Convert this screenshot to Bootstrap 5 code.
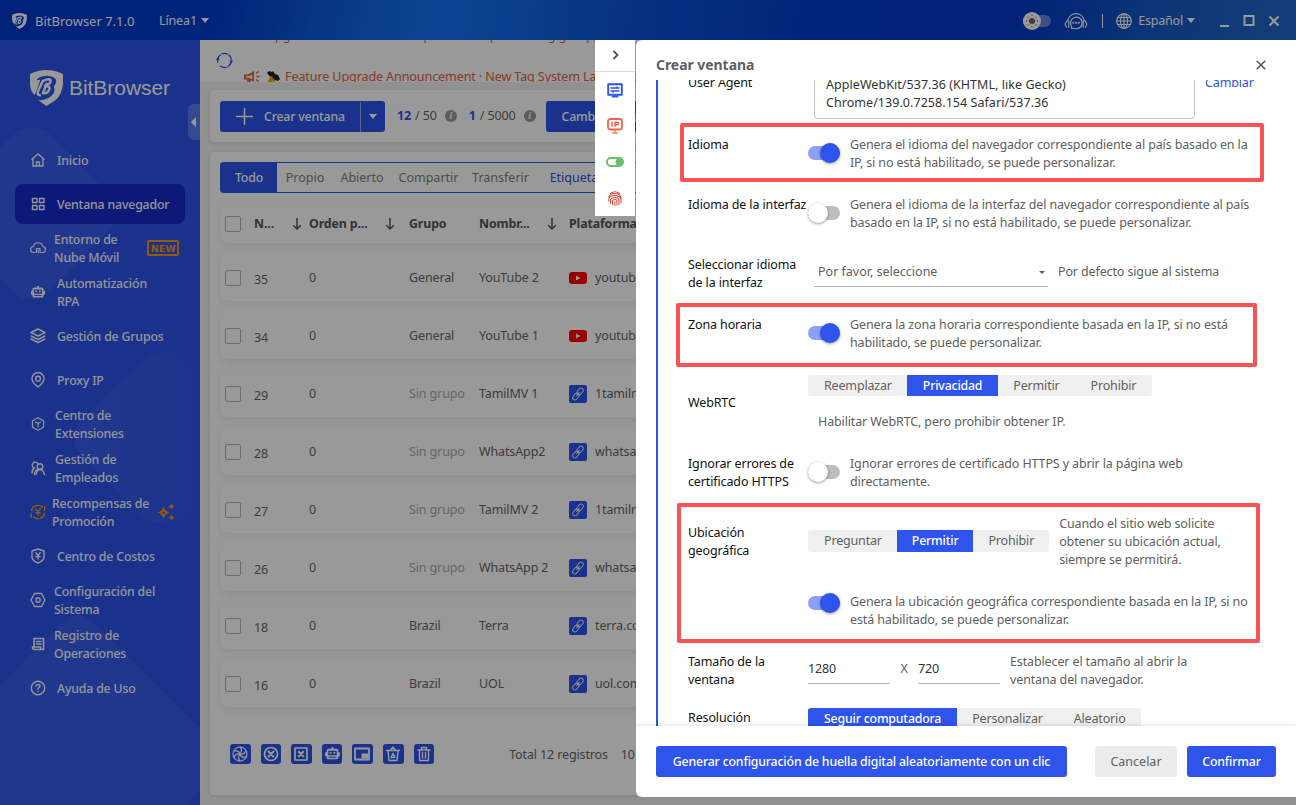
<!DOCTYPE html>
<html lang="es">
<head>
<meta charset="utf-8">
<meta name="viewport" content="width=device-width, initial-scale=1">
<title>BitBrowser</title>
<link href="https://cdn.jsdelivr.net/npm/bootstrap@5.3.0/dist/css/bootstrap.min.css" rel="stylesheet">
<style>
:root{--pri:#2e54eb}
body{font-family:"Noto Sans","Noto Sans CJK SC",sans-serif;font-size:12.5px;letter-spacing:-.13px;line-height:18px;color:#666;background:#f2f2f2;width:1296px;height:805px;overflow:hidden}
svg{display:block;flex:none}
.ic{fill:none;stroke:currentColor;stroke-width:1.4;stroke-linecap:round;stroke-linejoin:round}
.semi{font-weight:500;font-size:12.3px;letter-spacing:-.16px}
.fill-pri{background:var(--pri);color:#fff}
.txt-pri{color:var(--pri)}
.titlebar{height:40px;color:#fff;background:linear-gradient(100deg,#0039cc 0,#003dcc 17%,#0b59dd 24%,#1672f5 34%,#0b55dd 48%,#0039c8 64%,#0037c6 78%,#1458c6 88%,#2068c9 100%);padding:1px 17px 0 12px}
.appname{font-size:13px;letter-spacing:0;width:100px}
.caret{width:0;height:0;border:4.5px solid transparent;border-top:5px solid currentColor;border-bottom:0}
.daynight{width:28px;height:12px;border-radius:6px;background:linear-gradient(90deg,#fff 50%,#6c82dd 50%)}
.daynight svg{position:absolute;left:0;top:-3px}
.vline{width:1px;height:14px;background:#fff}
.side{width:200px;height:765px;background:var(--pri);color:#fff}
.side-deco{position:absolute;inset:0}
.brand-name{font:21px "Liberation Sans",Arial,sans-serif;letter-spacing:-.05px;margin-left:6px;padding-top:6px}
.brand{padding:30px 0 0 30px;height:99px}
.handle{position:absolute;left:188px;top:64px;width:12px;height:36px;border-radius:6px 0 0 6px;background:rgba(255,255,255,.22)}
.handle::after{content:"";position:absolute;left:3px;top:13px;border:5px solid transparent;border-right-color:#fff;border-left:0}
.menu{padding:1px 15px}
.menu-item{height:40px;margin-bottom:4px;border-radius:8px;padding:2px 0 0 14px;opacity:.96}
.menu-item.on{background:#162ac8}
.menu-item svg{width:18px;height:18px;margin:-2px 10px 0 0}
.menu-item.m1 svg{margin-right:7px}.menu-item.m2 svg{margin-right:5px}.menu-item.m3 svg{margin-right:8px}
.gold{color:#f90}
.new-tag{border:2px solid #f90;color:#f90;font:bold 9.5px/11px "DejaVu Sans",sans-serif;border-radius:2px;letter-spacing:0;width:32px;height:16px;padding-top:.5px;margin:-2px 0 0 28px}
.main-col{width:1096px}
.notice{height:42px;overflow:hidden;background:#fff;padding-left:16px;color:#e0643c}
.notice-lines{margin:-13px 0 0 11px;font-size:12.6px;line-height:18px;letter-spacing:-.13px;white-space:nowrap}
.notice-prev{padding-left:22px}
.notice-cur{margin-top:23px}
.panel{background:#fff;margin-left:10px;border-radius:4px;box-shadow:0 1px 4px rgba(0,0,0,.12)}
.toolbar{height:52px;margin-top:8px;padding-left:10px}
.blk{height:31px;border-radius:3px;padding-top:1px}
.new-win{width:165px}
.new-win svg{margin:0 11px 0 16px}
.gap12{margin-left:12px}
.info{width:12px;height:12px;border-radius:50%;background:#999;color:#fff;font:italic bold 10px/12px "Liberation Serif",serif}
.listing{height:643px;margin-top:10px;padding:10px 0 0 10px}
.filters{height:31px;border:1px solid var(--pri);border-radius:3px 0 0 3px;color:#808080;letter-spacing:0}
.filters>span{width:56px;text-align:center;padding-top:1px}
.filters>.w58{width:58px}.filters>.w75{width:75px}.filters>.w69{width:69px}.filters>.w84{width:84px}
.gridrow{display:grid;grid-template-columns:29px 38px 17px 76px 24px 70px 68px 22px 300px;align-items:center;height:48px;margin-bottom:10px;border-radius:8px;box-shadow:0 3px 8px rgba(0,0,0,.07);padding:1px 0 0 5px;white-space:nowrap}
.gridhead{height:40px;margin-top:10px;font-weight:700;color:#555;font-size:12.4px}
.boxchk{width:16px;height:16px;border:1px solid #b4b4b4;border-radius:2px;margin-top:1px}
.none{color:#aaa}
.linkic{width:18px;height:18px;border-radius:2px}
.actions{padding:26px 0 0 10px}
.actions .act{width:20.600px;height:20px;border-radius:3px;margin-right:10px}
.shade{position:absolute;inset:0;background:rgba(0,0,0,.4)}
.quick{position:absolute;left:595px;top:40px;width:40px;height:176px;background:#fff}
.quick-top{height:32px;border-bottom:1px solid #ddd}
.drawer{position:absolute;left:636px;top:40px;width:660px;height:757px;background:#fff;border-radius:6px 0 0 6px;color:#606060;overflow:hidden}
.drawer-head{height:40px;padding:10px 30px 0 20px}
.drawer-head b{font-size:14px;letter-spacing:-.05px;color:#606060}
.drawer-body{height:646px;overflow:hidden;margin-left:20px;border-left:2px solid var(--pri);padding-left:30px}
.drawer-foot{height:71px;box-shadow:0 -1px 4px rgba(0,0,0,.12);padding:0 20px;position:relative}
.frow{display:flex;white-space:nowrap}
.flabel{width:120px;color:#111;flex:none}
.h55{height:55px}.h56{height:56px}.h59{height:59px}.h60{height:60px}.h78{height:78px}.h80{height:80px}
.ua{margin:-10px 10px 0 6px;width:381px;height:49px;border:1px solid #c4c4c4;border-radius:4px;padding:5px 11px 0;color:#333;letter-spacing:.05px}
.up6{margin-top:-6px}
.sw{width:32px;height:20px;margin:7px 10px 0 0;position:relative;flex:none}
.sw::before{content:"";position:absolute;left:0;top:3px;width:32px;height:14px;border-radius:7px;background:#bdbdbd}
.sw::after{content:"";position:absolute;left:0;top:0;width:20px;height:20px;border-radius:50%;background:#fff;box-shadow:0 1px 3px rgba(0,0,0,.4)}
.sw.on::before{background:#8da1f4}
.sw.on::after{left:12px;background:var(--pri)}
.picker{margin-left:6px;width:234px;height:31px;border-bottom:1px solid #b5b5b5;padding:2px 3px 0 4px;letter-spacing:0}
.picker .caret{border-width:3px 3px 0}
.seg{display:flex;height:21px;background:#f0f0f0;border-radius:3px;overflow:hidden;width:max-content;line-height:21px;letter-spacing:-.17px}
.seg>span{padding:0 15.500px}
.seg>.on{background:var(--pri);color:#fff;font-weight:500;font-size:12.3px}
.seg3>span{padding:0 15px}
.seg>span:first-child{padding-left:16px}
.uline{width:82px;height:31px;border-bottom:1px solid #b5b5b5;color:#333;line-height:31px}
.actbtn{height:31px;border:0;border-radius:3px;padding:1px 0 0;text-align:center}
.frame{position:absolute;border:4px solid #fb5254;border-radius:2px}
.frame.f1{left:680px;top:123px;width:584px;height:59px}
.frame.f2{left:676px;top:303px;width:581px;height:64px}
.frame.f3{left:677px;top:503px;width:583px;height:140px}
</style>
<script src="https://cdn.jsdelivr.net/npm/bootstrap@5.3.0/dist/js/bootstrap.bundle.min.js"></script>
</head>
<body class="position-relative">
<svg width="0" height="0" class="position-absolute">
  <symbol id="shield" viewBox="0 0 32 35"><path fill="#fff" d="M0 4Q8 0 16 0T32 4V14Q31 24 24 30L16 35L8 29.500C20 29 26 22 23 16Q28 10 23 7Q17 4 9 7L6 10L10 9.500L6 21Q4.500 25.500 3.500 23.500Q0 19 0 14Z"/><path fill="none" stroke="#fff" stroke-width="2.400" stroke-linejoin="round" d="M10.500 24.500Q5.500 25 8.500 19L12.500 10.500Q20 7.500 20 10.500Q20 14 14.500 15.500Q20.500 15.500 18.500 19.500Q16.500 23.500 12.500 22.500L16.500 12.500"/></symbol>
  <symbol id="robot" viewBox="0 0 18 18"><path fill="currentColor" fill-rule="evenodd" d="M8 3h2v1.500h3q1.500 0 1.500 1.500v1.500l1.500 .5v3.500l-1.500 .5v1q0 1.500-1.500 1.500H5q-1.500 0-1.500-1.500v-1L2 11.500V8l1.500-.5V6q0-1.500 1.500-1.500h3ZM5 6.500v4.200h8V6.500ZM5.500 12v1h7v-1ZM6.300 7.500h1.700v1.700H6.300ZM10 7.500h1.700v1.700H10Z"/></symbol>
  <symbol id="chain" viewBox="0 0 18 18"><g fill="none" stroke="#fff" stroke-width="1" stroke-opacity=".85" transform="rotate(-50 9 9)"><rect x="2" y="6.800" width="7.500" height="4.400" rx="2.200"/><rect x="8.500" y="6.800" width="7.500" height="4.400" rx="2.200"/><path d="M6.500 9h5"/></g></symbol>
  <symbol id="tube" viewBox="0 0 18 12"><rect width="18" height="12" rx="3" fill="red"/><path d="M7 3.500v5L11.500 6Z" fill="#fff"/></symbol>
  <symbol id="sortdown" viewBox="0 0 10 14"><path fill="none" stroke="#555" stroke-width="1.500" d="M5 1v11M1.200 8.300 5 12l3.800-3.700"/></symbol>
</svg>

<header class="titlebar d-flex align-items-center">
  <svg width="15" height="16"><use href="#shield"/></svg>
  <span class="appname ms-2">BitBrowser 7.1.0</span>
  <span class="ms-4">Línea1</span><i class="caret ms-1"></i>
  <div class="d-flex align-items-center ms-auto">
    <div class="daynight position-relative"><svg width="18" height="18" viewBox="0 0 18 18"><circle cx="9" cy="9" r="9" fill="#fff"/><circle cx="9" cy="9" r="3" fill="#666"/><path d="M9 4V3M9 15v-1M4 9H3M15 9h-1M5.500 5.500l-.7-.7M12.500 5.500l.7-.7M5.500 12.500l-.7.7M12.500 12.500l.7.7" stroke="#777" stroke-width="1.300"/></svg></div>
    <svg width="24" height="18" viewBox="0 0 24 18" class="ic me-3" style="margin-left:13px"><g stroke-width="1.200"><path d="M4 8a8.200 8.200 0 0 1 16 0M3.500 8.500Q-.5 12 2.500 15M20.500 8.500Q24.500 12 21.500 15M4.800 9v6.500M19.200 9v6.500"/><path d="M7.500 16.500l.3-2a5.800 5.800 0 1 1 3 2Z"/></g><path d="M9.300 10.700h.1M12 10.700h.1M14.700 10.700h.1" stroke-width="1.900"/></svg>
    <i class="vline" style="margin-right:13px;margin-left:-2px"></i>
    <svg width="16" height="16" viewBox="0 0 16 16" class="ic"><g stroke-width="1.100"><circle cx="8" cy="8" r="7.300"/><ellipse cx="8" cy="8" rx="3.500" ry="7.300"/><path d="M8 .7v14.600M.7 8h14.600M1.700 4.500h12.600M1.700 11.500h12.600"/></g></svg>
    <span style="margin:0 4px 0 6px;letter-spacing:-.2px">Español</span><i class="caret"></i>
    <svg class="ms-4" width="60" height="14" viewBox="0 0 60 14" fill="none" stroke="#fff" stroke-width="2"><path d="M1 12h9M50.500 2.500l9 9M59.500 2.500l-9 9"/><path d="M25.500 2h9v9h-9z"/></svg>
  </div>
</header>

<div class="d-flex">
<aside class="side position-relative flex-shrink-0">
  <svg class="side-deco" width="200" height="765"><defs><linearGradient id="fade" x1="0" x2="1"><stop offset="0" stop-color="#fff" stop-opacity=".055"/><stop offset="1" stop-color="#fff" stop-opacity="0"/></linearGradient></defs><g fill="#fff" fill-opacity=".045"><path d="M0 108L17 92Q32 82 47 92L114 159Q122 173 112 187L47 253Q32 265 17 255L0 238Z"/><path d="M0 646L62 583Q78 568 94 583L200 689V750L186 765H0Z"/></g><path fill="url(#fade)" d="M78 384L144 319Q160 307 176 317L200 330V470L176 479Q160 487 144 478L80 415Q70 399 78 384Z"/></svg>
  <div class="brand d-flex position-relative"><svg width="33" height="36"><use href="#shield"/></svg><span class="brand-name">BitBrowser</span></div>
  <i class="handle"></i>
  <nav class="menu semi position-relative">
    <div class="menu-item d-flex align-items-center"><svg class="ic" viewBox="0 0 18 18"><path d="M3 8.300L9 3l6 5.300M4 8v7h10V8M7.500 15v-4h3v4"/></svg>Inicio</div>
    <div class="menu-item on d-flex align-items-center"><svg class="ic" viewBox="0 0 18 18"><path d="M3.500 3.500h4.500v4H3.500zM10.500 3.500H15v4h-4.500zM3.500 10.500h4.500v4H3.500zM10.500 10.500H15v4h-4.500z"/></svg>Ventana navegador</div>
    <div class="menu-item m1 d-flex align-items-center"><svg class="ic" viewBox="0 0 18 18"><path d="M6 13.500H5a3 3 0 0 1-.5-6 4.700 4.700 0 0 1 9.200 0 3 3 0 0 1-.5 6H12M7.500 13.500V9.500h3.500v4M9.300 11v2.500" stroke-width="1.200"/></svg><span>Entorno de<br>Nube Móvil</span><span class="new-tag text-center">NEW</span></div>
    <div class="menu-item d-flex align-items-center"><svg viewBox="0 0 18 18"><use href="#robot"/></svg><span>Automatización<br>RPA</span></div>
    <div class="menu-item d-flex align-items-center"><svg class="ic" viewBox="0 0 18 18"><path d="M9 2l7 3.500L9 9 2 5.500zM2 9l7 3.500L16 9M2 12l7 3.500 7-3.500"/></svg>Gestión de Grupos</div>
    <div class="menu-item d-flex align-items-center"><svg class="ic" viewBox="0 0 18 18"><path d="M9 16Q3 11.500 3 7.500a6 6 0 0 1 12 0Q15 11.500 9 16Z"/><circle cx="9" cy="7.700" r="2.400"/></svg>Proxy IP</div>
    <div class="menu-item m3 d-flex align-items-center"><svg class="ic" viewBox="0 0 18 18"><path d="M9 2.700l5.500 3v6.600L9 15.300l-5.500-3V5.700zM6.500 7L9 8.500 11.500 7M9 8.500V12" stroke-width="1.200"/></svg><span>Centro de<br>Extensiones</span></div>
    <div class="menu-item m3 d-flex align-items-center"><svg class="ic" viewBox="0 0 18 18"><path d="M5.500 9a3 3 0 1 1 3.500-4M3 14q0-4 2.500-5M5.500 15.500q0-4 3.500-5"/><circle cx="11" cy="7.500" r="2.800"/><path d="M7 15.500q.5-4.500 4-5 3.500.5 4.500 5"/></svg><span>Gestión de<br>Empleados</span></div>
    <div class="menu-item m2 d-flex align-items-center"><svg class="ic gold" viewBox="0 0 18 18"><path d="M2.500 7.500A6.800 6.800 0 0 1 13.500 4M15.500 10.500A6.800 6.800 0 0 1 4.500 14M15.700 3.500v3.500M2.300 14.500V11M6.500 6L9 8.500 11.500 6M9 8.500V12M7 9.700h4"/></svg><span>Recompensas de<br>Promoción</span><svg viewBox="0 0 18 18" fill="#f90" class="gold ms-2 me-0"><path fill-rule="evenodd" d="M6.500 3Q7.500 8.500 13 9.500 7.500 10.500 6.500 16.500 5.500 10.500 0 9.500 5.500 8.500 6.500 3ZM6.500 8.500a1.200 1.200 0 1 0 .1 0ZM14.500 0Q15 3 18 3.500 15 4 14.500 7 14 4 11 3.500 14 3 14.500 0ZM14.500 11Q15 14 18 14.500 15 15 14.500 18 14 15 11 14.500 14 14 14.500 11Z"/></svg></div>
    <div class="menu-item d-flex align-items-center"><svg class="ic" viewBox="0 0 18 18"><path d="M9 2l6 2v6q0 3.500-6 6-6-2.500-6-6V4zM6.800 5.800L9 8.300l2.200-2.500M9 8.300V12M7 9.500h4"/></svg>Centro de Costos</div>
    <div class="menu-item m1 d-flex align-items-center"><svg class="ic" viewBox="0 0 18 18"><path d="M5.500 2.500h7L16 9l-3.500 6.500h-7L2 9z"/><circle cx="9" cy="9" r="2.200"/></svg><span>Configuración del<br>Sistema</span></div>
    <div class="menu-item m1 d-flex align-items-center"><svg class="ic" viewBox="0 0 18 18"><path d="M5 11.500V3.500h9.500v11H5.500q-2 0-2-2.500h8v2.500M7.500 6.500h4.500M7.500 9h4.500" stroke-width="1.600"/></svg><span>Registro de<br>Operaciones</span></div>
    <div class="menu-item d-flex align-items-center"><svg class="ic" viewBox="0 0 18 18"><circle cx="9" cy="9" r="6.700"/><path d="M7 7.200Q7.200 5.500 9 5.500t2 1.700Q11 8.500 9 9.300v1M9 12.500v.1"/></svg>Ayuda de Uso</div>
  </nav>
</aside>

<main class="main-col">
  <div class="notice d-flex">
    <svg width="17" height="17" viewBox="0 0 17 17" class="ic txt-pri" style="margin-top:12px"><path stroke-width="1.300" d="M1.800 10A7 7 0 0 1 4.300 2.900M6 1.900A7 7 0 0 1 11.500 2.100M13 3.100A7 7 0 0 1 15.300 8M15 10.500A7 7 0 0 1 12 14.500M10.300 15.300A7 7 0 0 1 4.500 14.300"/><path fill="currentColor" d="M0 8L1.800 5 3.700 8zM13.300 8.500L15.200 11.500 17 8.500z" stroke="none"/></svg>
    <div class="notice-lines">
      <div class="notice-prev">Upgrade Announcement: update of important tag group,</div>
      <div class="notice-cur d-flex align-items-center">
        <svg width="16" height="14" viewBox="0 0 16 14"><path fill="currentColor" fill-rule="evenodd" d="M0 4.500h4L10 1v11L6.500 10 7 13.500H3.500L3 9.500H0ZM2 6.200v1.600h3L8.200 9.500v-5L5 6.200Z"/><path d="M12 3.500l2.500-2M12.500 6.500H15.500M12 9.500l2.500 2" stroke="currentColor" stroke-width="1.600"/></svg>
        <svg width="15" height="14" viewBox="0 0 15 14" style="margin:0 4px 0 6px"><path d="M1 3l2-2 3 1 1-1 2 3 3 1 2 4-2 2-6-2z" fill="#222"/><path d="M1 13L5 5.500 9.500 11z" fill="#f2a20c"/></svg>
        <span>Feature Upgrade Announcement · New Tag System Launched</span>
      </div>
    </div>
  </div>

  <section class="panel toolbar d-flex align-items-center">
    <div class="blk new-win fill-pri semi d-flex align-items-center">
      <svg width="17" height="17" viewBox="0 0 17 17"><path d="M8.500 0v17M0 8.500h17" stroke="#fff" stroke-width="1.500"/></svg>Crear ventana
      <span class="ms-auto d-flex align-items-center h-100 px-2 border-start border-light border-opacity-50"><i class="caret"></i></span>
    </div>
    <b class="txt-pri gap12">12</b><span class="mx-1">/ 50</span><span class="info text-center ms-1">i</span>
    <b class="txt-pri gap12">1</b><span class="mx-1">/ 5000</span><span class="info text-center ms-1">i</span>
    <div class="blk fill-pri semi d-flex align-items-center" style="margin-left:10px;width:140px;padding-left:16px">Cambiar vista</div>
  </section>

  <section class="panel listing">
    <div class="filters d-flex align-items-center">
      <span class="fill-pri semi h-100 d-flex align-items-center justify-content-center">Todo</span><span>Propio</span><span class="w58">Abierto</span><span class="w75">Compartir</span><span class="w69">Transferir</span><span class="w84 txt-pri">Etiquetas</span>
    </div>
    <div class="gridrow gridhead"><i class="boxchk"></i><span>N...</span><svg width="10" height="14"><use href="#sortdown"/></svg><span>Orden p...</span><svg width="10" height="14"><use href="#sortdown"/></svg><span>Grupo</span><span>Nombr...</span><svg width="10" height="14"><use href="#sortdown"/></svg><span>Plataforma</span></div>
    <div id="rows"></div>
    <div class="actions d-flex align-items-center">
      <span class="act fill-pri"><svg class="ic" width="20" height="20" viewBox="0 0 20 20"><circle cx="10" cy="10" r="7" stroke-width="1.200"/><path d="M10 3q3 3 0 7M16 7q-2 4-6 3M16 13q-5 1-6-3M10 17q-3-3 0-7M4 13q2-4 6-3M4 7q5-1 6 3" stroke-width="1.200"/></svg></span>
      <span class="act fill-pri"><svg class="ic" width="20" height="20" viewBox="0 0 20 20" ><circle cx="10" cy="10" r="6.500" stroke-width="1.700"/><path d="M7.500 7.500l5 5M12.500 7.500l-5 5" stroke-width="2"/></svg></span>
      <span class="act fill-pri"><svg class="ic" width="20" height="20" viewBox="0 0 20 20"><path d="M4 4h12v12H4z" stroke-width="1.700"/><path d="M7.800 7.800l4.400 4.400M12.200 7.800l-4.400 4.400" stroke-width="2.200"/></svg></span>
      <span class="act fill-pri d-flex align-items-center justify-content-center"><svg width="19" height="19"><use href="#robot"/></svg></span>
      <span class="act fill-pri"><svg class="ic" width="20" height="20" viewBox="0 0 20 20"><path d="M3 4.500h14v11H3z" stroke-width="1.800"/><path d="M9.500 9.500h6.500v5H9.500z" fill="#fff" stroke="none"/></svg></span>
      <span class="act fill-pri"><svg class="ic" width="20" height="20" viewBox="0 0 20 20"><path d="M3.500 6.500h13M5 6.500l1 10h8l1-10M7.500 6l2.500-3 2.500 3M8 13.500h4L10 9.500z"/></svg></span>
      <span class="act fill-pri"><svg class="ic" width="20" height="20" viewBox="0 0 20 20"><path d="M4 6h12M5.500 6v10.500h9V6M7.500 5.500V3.500h5v2M8.500 8.500v5.500M11.500 8.500v5.500"/></svg></span>
      <span style="margin:3px 0 0 65px">Total 12 registros</span><span style="margin:3px 0 0 13px">10</span>
    </div>
  </section>
</main>
</div>

<div class="shade"></div>

<div class="quick">
  <div class="quick-top d-flex justify-content-center"><svg style="margin-top:10px" width="9" height="10" viewBox="0 0 9 10"><path d="M2.500 1l4 4-4 4" fill="none" stroke="#555" stroke-width="1.800"/></svg></div>
  <div class="d-flex flex-column align-items-center">
  <svg style="margin-top:11px" width="16" height="15" viewBox="0 0 16 15" class="ic txt-pri"><path d="M1.200 1.300h13.600v10.400H1.200z" stroke-width="1.900"/><path d="M4 5h8M4 8h8M10 3.800V5M6 8v1.300" stroke-width="1.300"/><path d="M5.500 13.500h5" stroke-width="2"/></svg>
  <svg style="margin-top:20px;color:#ee6352" width="16" height="16" viewBox="0 0 16 16" class="ic"><rect x="1" y="1" width="14" height="10.500" rx="2.500" stroke-width="1.800"/><path d="M5 4.300v4M8 8.300v-4h2q1.500 0 1.500 1.200T10 6.800H8" stroke-width="1.500"/><path d="M8 12v2.500M5.500 15h5" stroke="#dd8a5a"/></svg>
  <svg style="margin-top:23px" width="18" height="10" viewBox="0 0 18 10"><rect x="1" y="1" width="16" height="8" rx="3.500" fill="none" stroke="#6cbd72" stroke-width="1.800"/><circle cx="13" cy="5" r="3.500" fill="#6cbd72"/></svg>
  <svg style="margin-top:24px;color:#e2503f" width="14" height="15" viewBox="0 0 14 15" class="ic"><g stroke-width="1.100"><path d="M2.500 2.500Q7-1 11.500 2.500M.8 6Q2 2.500 7 2.500T13.200 7M.8 10V8Q1.500 4.500 7 4.500t6 5V12M2.500 12.500V9Q3 6.500 7 6.500t4 3.500v3.500M4.500 13.500V10Q5 8.500 7 8.500T9 11v3M6.800 14.500V11"/></g></svg>
  </div>
</div>

<section class="drawer">
  <div class="drawer-head d-flex align-items-center"><b>Crear ventana</b><svg class="ms-auto" width="10" height="10" viewBox="0 0 10 10"><path d="M.7.7l8.600 8.600M9.300.7L.7 9.300" stroke="#555" stroke-width="1.500"/></svg></div>
  <div class="drawer-body">
    <div class="frow h56"><div class="flabel up6">User Agent</div><div class="ua">AppleWebKit/537.36 (KHTML, like Gecko)<br>Chrome/139.0.7258.154 Safari/537.36</div><span class="txt-pri up6">Cambiar</span></div>
    <div class="frow h60"><div class="flabel">Idioma</div><i class="sw on"></i><div>Genera el idioma del navegador correspondiente al país basado en la<br>IP, si no está habilitado, se puede personalizar.</div></div>
    <div class="frow h60"><div class="flabel">Idioma de la interfaz</div><i class="sw"></i><div>Genera el idioma de la interfaz del navegador correspondiente al país<br>basado en la IP, si no está habilitado, se puede personalizar.</div></div>
    <div class="frow h60"><div class="flabel">Seleccionar idioma<br>de la interfaz</div><div class="picker d-flex justify-content-between align-items-center">Por favor, seleccione<i class="caret"></i></div><span style="margin:7px 0 0 10px">Por defecto sigue al sistema</span></div>
    <div class="frow h59"><div class="flabel">Zona horaria</div><i class="sw on"></i><div>Genera la zona horaria correspondiente basada en la IP, si no está<br>habilitado, se puede personalizar.</div></div>
    <div class="frow h80"><div class="flabel" style="padding-top:19px">WebRTC</div><div><div class="seg"><span>Reemplazar</span><span class="on">Privacidad</span><span>Permitir</span><span>Prohibir</span></div><div style="margin:17px 0 0 10px">Habilitar WebRTC, pero prohibir obtener IP.</div></div></div>
    <div class="frow h60"><div class="flabel">Ignorar errores de<br>certificado HTTPS</div><i class="sw"></i><div>Ignorar errores de certificado HTTPS y abrir la página web<br>directamente.</div></div>
    <div class="frow h78"><div class="flabel" style="padding-top:9px">Ubicación<br>geográfica</div><div class="seg seg3" style="margin:15px 10px 0 0;height:22px"><span>Preguntar</span><span class="on">Permitir</span><span>Prohibir</span></div><div>Cuando el sitio web solicite<br>obtener su ubicación actual,<br>siempre se permitirá.</div></div>
    <div class="frow h60"><div class="flabel"></div><i class="sw on" style="margin-top:0"></i><div>Genera la ubicación geográfica correspondiente basada en la IP, si no<br>está habilitado, se puede personalizar.</div></div>
    <div class="frow h55"><div class="flabel">Tamaño de la<br>ventana</div><div class="uline">1280</div><span style="width:28px;margin-top:7px" class="text-center">X</span><div class="uline">720</div><div style="margin-left:10px">Establecer el tamaño al abrir la<br>ventana del navegador.</div></div>
    <div class="frow"><div class="flabel" style="padding-top:1px">Resolución</div><div class="seg"><span class="on">Seguir computadora</span><span>Personalizar</span><span>Aleatorio</span></div></div>
  </div>
  <div class="drawer-foot d-flex align-items-center">
    <button class="actbtn fill-pri semi" style="width:411px">Generar configuración de huella digital aleatoriamente con un clic</button>
    <button class="actbtn ms-auto" style="width:82px;background:#ececec;color:#606060">Cancelar</button>
    <button class="actbtn fill-pri semi" style="width:89px;margin-left:10px">Confirmar</button>
  </div>
</section>
<i class="frame f1"></i><i class="frame f2"></i><i class="frame f3"></i>

<script>
const profiles=[[35,'General','YouTube 2','youtube.com'],[34,'General','YouTube 1','youtube.com'],[29,'','TamilMV 1','1tamilmv.com'],[28,'','WhatsApp2','whatsapp.com'],[27,'','TamilMV 2','1tamilmv.com'],[26,'','WhatsApp 2','whatsapp.com'],[18,'Brazil','Terra','terra.com.br'],[16,'Brazil','UOL','uol.com.br']];
document.getElementById('rows').innerHTML=profiles.map(([id,group,name,site])=>{
  const icon=site.startsWith('youtube')?'<svg width="18" height="12"><use href="#tube"/></svg>':'<span class="linkic fill-pri"><svg width="18" height="18"><use href="#chain"/></svg></span>';
  return `<div class="gridrow"><i class="boxchk"></i><span class="pt-1">${id}</span><i></i><span>0</span><i></i><span class="${group?'':'none'}">${group||'Sin grupo'}</span><span>${name}</span><i></i><span class="d-flex align-items-center gap-2">${icon}${site}</span></div>`;
}).join('');
</script>
</body>
</html>
